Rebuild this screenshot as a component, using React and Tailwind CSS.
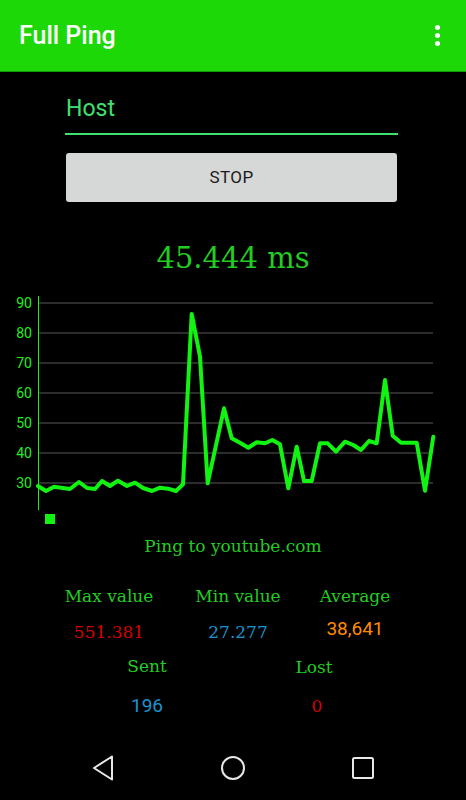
const serif = { fontFamily: '"DejaVu Serif", "Liberation Serif", serif' };

const points = [
  [38, 486], [46, 491], [54, 486.7], [70, 489], [79, 482], [87, 488], [95, 489],
  [102, 481], [110, 486], [118, 480.7], [127, 486], [135, 482.7], [143, 488],
  [152, 491], [160, 487.7], [168, 488.7], [176, 491], [183, 484.3], [191.7, 314],
  [200, 356.7], [207.7, 483.3], [224, 408.3], [231.7, 438.3], [240, 442.7],
  [248.3, 447.7], [256.7, 442.3], [265, 443.3], [272.3, 440], [280, 444.3],
  [288.3, 488.3], [296.7, 446.7], [304, 481], [311.7, 481], [320, 443.3],
  [327.7, 443.3], [336, 451.7], [345, 441.7], [353.3, 445], [361, 450], [369, 441],
  [376.7, 443.3], [385, 380], [392.7, 435.7], [401, 442.7], [416.7, 442.7],
  [425, 490.7], [433.3, 436.7],
];

const ticks = [90, 80, 70, 60, 50, 40, 30];

function Chart() {
  return (
    <svg width="466" height="240" viewBox="0 290 466 240" className="block">
      {ticks.map((t, i) => {
        const y = 303 + i * 30;
        return (
          <g key={t}>
            <line x1="38" x2="433" y1={y} y2={y} stroke="#5a5a5a" strokeWidth="1" />
            <text
              x="32"
              y={y + 5}
              textAnchor="end"
              fill="#22ee22"
              fontSize="14"
              fontFamily="Roboto, sans-serif"
            >
              {t}
            </text>
          </g>
        );
      })}
      <line x1="38.5" x2="38.5" y1="296" y2="510" stroke="#22ee22" strokeWidth="1" />
      <polyline
        points={points.map((p) => p.join(",")).join(" ")}
        fill="none"
        stroke="#11f311"
        strokeWidth="4"
        strokeLinejoin="round"
        strokeLinecap="round"
      />
      <rect x="45" y="514" width="10" height="10" fill="#11f311" />
    </svg>
  );
}

export default function App() {
  return (
    <div className="flex h-[800px] w-[466px] flex-col bg-black font-['Roboto',sans-serif]">
      <header className="flex h-[72px] shrink-0 items-center justify-between border-b border-[#149a05] bg-[#1dd807] pl-[19px] pr-[26px]">
        <h1 className="text-[25px] font-medium text-white">Full Ping</h1>
        <div className="flex flex-col gap-[3px]">
          <span className="h-[5px] w-[5px] rounded-full bg-white" />
          <span className="h-[5px] w-[5px] rounded-full bg-white" />
          <span className="h-[5px] w-[5px] rounded-full bg-white" />
        </div>
      </header>

      <div className="ml-[65px] mr-[68px] mt-[24px] flex h-[39px] items-start border-b-2 border-[#3fe070]">
        <span className="pl-[1px] text-[23px] leading-[26px] text-[#3fe070]">Host</span>
      </div>

      <button className="ml-[66px] mr-[69px] mt-[18px] h-[49px] rounded-[3px] bg-[#d6d7d7] text-[17px] font-normal tracking-wide text-[#1a1a1a] shadow-[0_1px_1px_rgba(0,0,0,0.4)]">
        STOP
      </button>

      <div className="mt-[36px] h-[52px] text-center text-[29px] leading-[40px] text-[#22cc22]" style={serif}>
        45.444 ms
      </div>

      <Chart />

      <div className="mt-[4px] text-center text-[17px] leading-[24px] text-[#22cc22]" style={serif}>
        Ping to youtube.com
      </div>

      <div className="mt-[26px] grid grid-cols-[154px_104px_130px] pl-[32px] text-center text-[17px]" style={serif}>
        <span className="leading-[24px] text-[#22cc22]">Max value</span>
        <span className="leading-[24px] text-[#22cc22]">Min value</span>
        <span className="leading-[24px] text-[#22cc22]">Average</span>
        <span className="mt-[12px] text-[17px] leading-[24px] text-[#d40000]">551.381</span>
        <span className="mt-[12px] text-[17px] leading-[24px] text-[#1a94cf]">27.277</span>
        <span className="mt-[9px] font-['Roboto',sans-serif] text-[19px] leading-[24px] text-[#ff8a00]">38,641</span>
      </div>

      <div className="mt-[8px] grid grid-cols-[110px_120px] gap-x-[52px] pl-[92px] text-center text-[17px]" style={serif}>
        <span className="mt-[2px] leading-[24px] text-[#22cc22]">Sent</span>
        <span className="mt-[3px] leading-[24px] text-[#22cc22]">Lost</span>
        <span className="mt-[15px] font-['Roboto',sans-serif] text-[19px] leading-[24px] text-[#1a94cf]">196</span>
        <span className="mt-[15px] pl-[6px] leading-[24px] text-[#d40000]">0</span>
      </div>

      <nav className="mx-auto mt-auto grid h-[64px] w-[390px] grid-cols-3 place-items-center">
        <svg width="24" height="28" viewBox="0 0 24 28" fill="none" stroke="#e8e8e8" strokeWidth="2" strokeLinejoin="round">
          <path d="M21 2.5 L3 14 L21 25.5 Z" />
        </svg>
        <svg width="26" height="26" viewBox="0 0 26 26" fill="none" stroke="#e8e8e8" strokeWidth="2">
          <circle cx="13" cy="13" r="11" />
        </svg>
        <svg width="24" height="24" viewBox="0 0 24 24" fill="none" stroke="#e8e8e8" strokeWidth="2">
          <rect x="2" y="2" width="20" height="20" rx="1.5" />
        </svg>
      </nav>
    </div>
  );
}
